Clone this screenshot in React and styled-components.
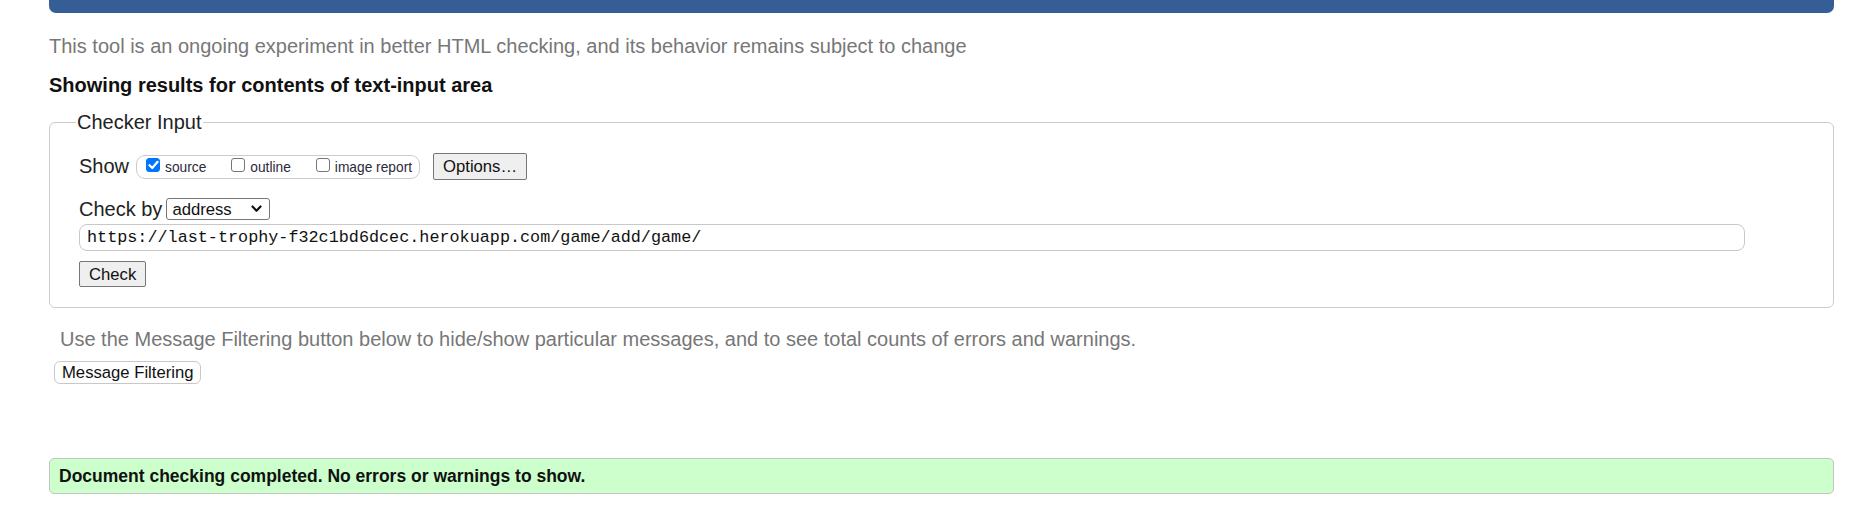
import React from "react";
import styled, { createGlobalStyle } from "styled-components";

const Global = createGlobalStyle`
  html, body { margin: 0; padding: 0; background: #fff; }
  body { font-family: "Liberation Sans", Arial, sans-serif; color: #222; }
  * { box-sizing: border-box; }
`;

const Page = styled.div`
  padding: 0 41px 0 49px;
`;

const TopBar = styled.div`
  height: 13px;
  background: #365e96;
  border-radius: 0 0 7px 7px;
`;

const Intro = styled.p`
  margin: 22px 0 0 0;
  font-size: 20px;
  line-height: 23px;
  color: #777;
`;

const Heading = styled.h2`
  margin: 16px 0 0 0;
  font-size: 20px;
  line-height: 23px;
  font-weight: bold;
  color: #111;
`;

const Fieldset = styled.fieldset`
  margin: 14px 0 0 0;
  padding: 19px 16px 20px 29px;
  border: 1px solid #ccc;
  border-radius: 6px;
  min-width: 0;
`;

const Legend = styled.legend`
  margin-left: -3px;
  padding: 0 1px;
  font-size: 20px;
  line-height: 23px;
  color: #222;
`;

const Row = styled.div`
  display: flex;
  align-items: center;
  height: ${(p) => p.$h}px;
  margin-top: ${(p) => p.$mt || 0}px;
`;

const Label = styled.span`
  font-size: 20px;
  line-height: 23px;
  color: #222;
  margin-right: ${(p) => p.$mr || 0}px;
`;

const ShowBox = styled.div`
  display: flex;
  align-items: center;
  height: 24px;
  padding: 0 7px 0 9px;
  border: 1px solid #ccc;
  border-radius: 9px;
  margin-right: 13px;
`;

const Option = styled.label`
  display: flex;
  align-items: center;
  margin-right: ${(p) => p.$mr || 0}px;
`;

const Box = styled.span`
  width: 14px;
  height: 14px;
  margin: 0 5px 4px 0;
  border-radius: 3px;
  border: 1px solid ${(p) => (p.$checked ? "#0075ff" : "#767676")};
  background: ${(p) => (p.$checked ? "#0075ff" : "#fff")};
  display: flex;
  align-items: center;
  justify-content: center;
`;

const OptText = styled.span`
  font-size: 13.75px;
  line-height: 16px;
  color: #2a2a3a;
  padding-top: 3px;
`;

const Button = styled.button`
  font-family: "Liberation Sans", Arial, sans-serif;
  font-size: 16.67px;
  line-height: 19px;
  color: #111;
  height: ${(p) => p.$h || 26}px;
  padding: 0 ${(p) => p.$px || 9}px;
  background: ${(p) => (p.$soft ? "#fff" : "#efefef")};
  border: 1px solid ${(p) => (p.$soft ? "#c8c8c8" : "#767676")};
  border-radius: ${(p) => (p.$soft ? 6 : 2)}px;
  margin: ${(p) => p.$m || "0"};
  display: block;
`;

const SelectWrap = styled.span`
  position: relative;
  display: inline-block;
`;

const Select = styled.select`
  appearance: none;
  width: 104px;
  height: 22px;
  padding: 0 0 0 5px;
  font-family: "Liberation Sans", Arial, sans-serif;
  font-size: 16.67px;
  line-height: 19px;
  color: #111;
  background: #fff;
  border: 1px solid #767676;
  border-radius: 3px;
`;

const Chevron = styled.svg`
  position: absolute;
  right: 8px;
  top: 7px;
  pointer-events: none;
`;

const UrlInput = styled.div`
  margin-top: 4px;
  width: 1666px;
  height: 27px;
  padding: 0 7px;
  border: 1px solid #c8c8c8;
  border-radius: 8px;
  display: flex;
  align-items: center;
  font-family: "Liberation Mono", "DejaVu Sans Mono", monospace;
  font-size: 16.8px;
  color: #111;
`;

const Note = styled.p`
  margin: 20px 0 0 11px;
  font-size: 20px;
  line-height: 23px;
  color: #777;
`;

const Success = styled.div`
  margin-top: 74px;
  height: 36px;
  padding: 0 9px;
  display: flex;
  align-items: center;
  background: #ccffcc;
  border: 1px solid #c4c4c4;
  border-radius: 5px;
  font-size: 17.5px;
  font-weight: bold;
  color: #111;
`;

const Check = () => (
  <svg width="11" height="10" viewBox="0 0 11 10">
    <path d="M1.5 5.2 L4.3 8 L9.6 1.8" fill="none" stroke="#fff" strokeWidth="2.2" strokeLinecap="round" strokeLinejoin="round" />
  </svg>
);

export default function App() {
  return (
    <Page>
      <Global />
      <TopBar />
      <Intro>This tool is an ongoing experiment in better HTML checking, and its behavior remains subject to change</Intro>
      <Heading>Showing results for contents of text-input area</Heading>
      <Fieldset>
        <Legend>Checker Input</Legend>
        <Row $h={27}>
          <Label $mr={7}>Show</Label>
          <ShowBox>
            <Option $mr={25}>
              <Box $checked>
                <Check />
              </Box>
              <OptText>source</OptText>
            </Option>
            <Option $mr={25}>
              <Box />
              <OptText>outline</OptText>
            </Option>
            <Option>
              <Box />
              <OptText>image report</OptText>
            </Option>
          </ShowBox>
          <Button $h={27} $px={9}>Options…</Button>
        </Row>
        <Row $h={22} $mt={18}>
          <Label $mr={4}>Check by</Label>
          <SelectWrap>
            <Select defaultValue="address">
              <option value="address">address</option>
              <option value="file">file upload</option>
              <option value="text">text input</option>
            </Select>
            <Chevron width="11" height="8" viewBox="0 0 11 8">
              <path d="M1.5 1.5 L5.5 5.8 L9.5 1.5" fill="none" stroke="#111" strokeWidth="2.2" strokeLinecap="round" strokeLinejoin="round" />
            </Chevron>
          </SelectWrap>
        </Row>
        <UrlInput>https://last-trophy-f32c1bd6dcec.herokuapp.com/game/add/game/</UrlInput>
        <Button $h={26} $px={9} $m="10px 0 0 0">Check</Button>
      </Fieldset>
      <Note>Use the Message Filtering button below to hide/show particular messages, and to see total counts of errors and warnings.</Note>
      <Button $soft $h={23} $px={7} $m="10px 0 0 5px">Message Filtering</Button>
      <Success>Document checking completed. No errors or warnings to show.</Success>
    </Page>
  );
}
